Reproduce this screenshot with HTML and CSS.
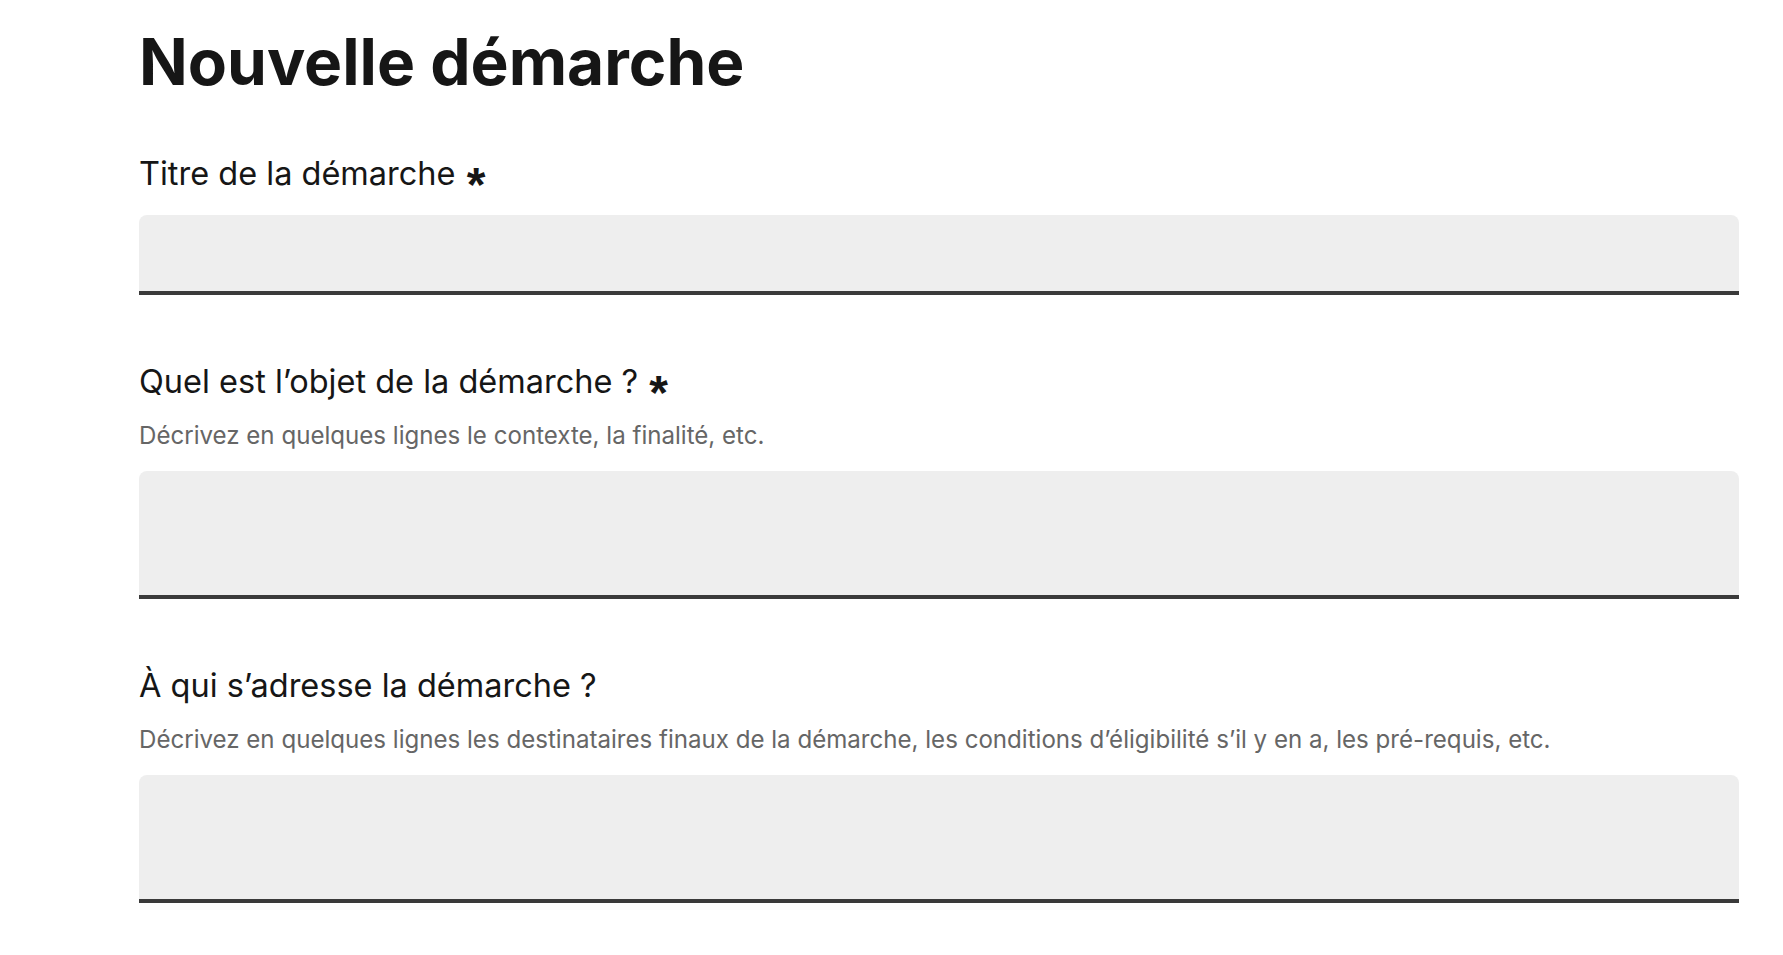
FILE: index.html
```html
<!DOCTYPE html>
<html lang="fr">
<head>
<meta charset="utf-8">
<title>Nouvelle démarche</title>
<link rel="stylesheet" href="styles.css">
</head>
<body>
<main class="page">
  <h1 class="page-title">Nouvelle démarche</h1>
  <form class="form">
    <div class="field field-first">
      <label class="label" for="titre">Titre de la démarche <span class="required">*</span></label>
      <input class="input" id="titre" type="text">
    </div>
    <div class="field">
      <label class="label" for="objet">Quel est l’objet de la démarche ? <span class="required">*</span></label>
      <p class="hint">Décrivez en quelques lignes le contexte, la finalité, etc.</p>
      <textarea class="input textarea" id="objet"></textarea>
    </div>
    <div class="field">
      <label class="label" for="public">À qui s’adresse la démarche ?</label>
      <p class="hint">Décrivez en quelques lignes les destinataires finaux de la démarche, les conditions d’éligibilité s’il y en a, les pré-requis, etc.</p>
      <textarea class="input textarea" id="public"></textarea>
    </div>
  </form>
</main>
</body>
</html>
```
FILE: styles.css
```css
html, body {
  margin: 0;
  padding: 0;
  background: #ffffff;
}
body {
  font-family: "Inter", "Noto Sans", sans-serif;
  color: #161616;
}
.page {
  width: 1600px;
  margin-left: 139px;
  padding-top: 22px;
}
.page-title {
  margin: 0;
  font-size: 64px;
  line-height: 80px;
  font-weight: 700;
  color: #161616;
  letter-spacing: 0;
}
.form {
  display: flex;
  flex-direction: column;
}
.field {
  display: flex;
  flex-direction: column;
  margin-top: 63px;
}
.field-first {
  margin-top: 48px;
}
.label {
  display: block;
  font-size: 32.5px;
  line-height: 48px;
  font-weight: 400;
  color: #161616;
}
.required {
  display: inline-block;
  margin-left: 2px;
  font-family: "Liberation Sans", Arial, sans-serif;
  font-weight: 700;
  font-size: 48px;
  line-height: 0.75;
  transform: translateY(16px);
}
.hint {
  margin: 10px 0 0;
  font-size: 24.1px;
  line-height: 40px;
  color: #666666;
}
.input {
  display: block;
  box-sizing: border-box;
  width: 100%;
  height: 80px;
  margin: 17px 0 0;
  padding: 16px 32px;
  border: 0;
  border-radius: 8px 8px 0 0;
  background: #eeeeee;
  box-shadow: inset 0 -4px 0 0 #3a3a3a;
  font: inherit;
  font-size: 32px;
  color: #161616;
  outline: none;
  resize: none;
}
.textarea {
  height: 128px;
  margin-top: 15px;
}
```
